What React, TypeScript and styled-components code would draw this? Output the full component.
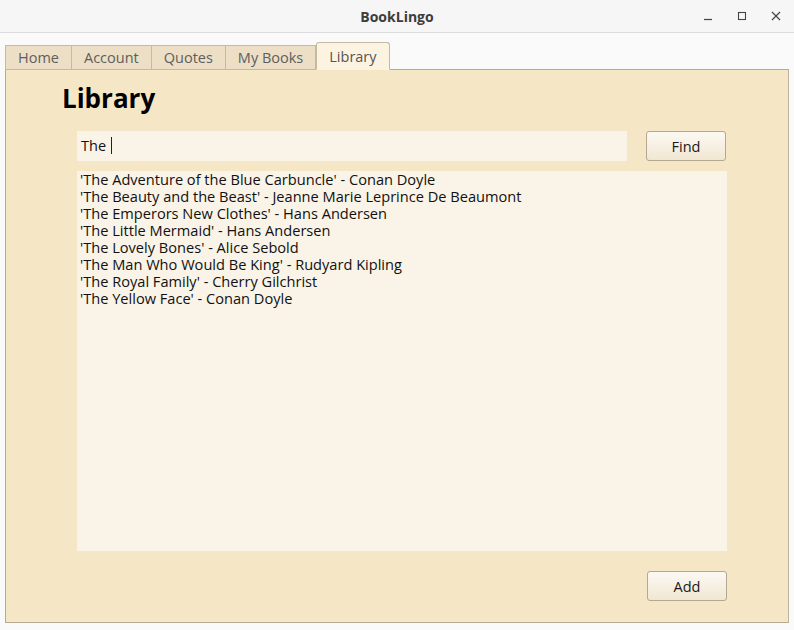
import React from "react"
import styled, { createGlobalStyle } from "styled-components"

const books = [
  "'The Adventure of the Blue Carbuncle' - Conan Doyle",
  "'The Beauty and the Beast' - Jeanne Marie Leprince De Beaumont",
  "'The Emperors New Clothes' - Hans Andersen",
  "'The Little Mermaid' - Hans Andersen",
  "'The Lovely Bones' - Alice Sebold",
  "'The Man Who Would Be King' - Rudyard Kipling",
  "'The Royal Family' - Cherry Gilchrist",
  "'The Yellow Face' - Conan Doyle",
]

const tabs = ["Home", "Account", "Quotes", "My Books", "Library"]

const GlobalStyle = createGlobalStyle`
  html, body {
    margin: 0;
    padding: 0;
    background: #fafafa;
    font-family: "Open Sans", "Noto Sans", sans-serif;
  }
`

const Window = styled.div`
  width: 794px;
  height: 630px;
  display: flex;
  flex-direction: column;
  background: #fafafa;
  overflow: hidden;
`

const TitleBar = styled.div`
  height: 32px;
  flex-shrink: 0;
  display: grid;
  grid-template-columns: 1fr auto 1fr;
  align-items: center;
  background: #f6f6f6;
  border-bottom: 1px solid #dcdcdc;
`

const Title = styled.div`
  grid-column: 2;
  font-size: 14px;
  font-weight: 700;
  color: #3d3d3d;
`

const Controls = styled.div`
  grid-column: 3;
  justify-self: end;
  display: flex;
  gap: 14px;
  padding-right: 8px;
  align-items: center;
`

const Control = styled.span`
  width: 20px;
  height: 20px;
  display: flex;
  align-items: center;
  justify-content: center;
  color: #4a4a4a;
`

const Body = styled.div`
  flex: 1;
  display: flex;
  flex-direction: column;
  padding: 10px 5px 7px 5px;
`

const TabRow = styled.div`
  display: flex;
  align-items: flex-end;
  height: 27px;
  position: relative;
  z-index: 1;
  margin-bottom: -1px;
`

const Tab = styled.div<{ $active?: boolean }>`
  box-sizing: border-box;
  height: ${p => (p.$active ? "28px" : "25px")};
  padding: 0 12px;
  display: flex;
  align-items: center;
  font-size: 14.5px;
  color: ${p => (p.$active ? "#555" : "#5e5e5e")};
  background: ${p => (p.$active ? "#fdf3e1" : "#ecdfc5")};
  border: 1px solid #c4b9a2;
  border-bottom: ${p => (p.$active ? "1px solid #fdf3e1" : "1px solid #c4b9a2")};
  border-left-width: ${p => (p.$active ? "1px" : "0")};
  border-radius: ${p => (p.$active ? "3px 3px 0 0" : "0")};
  &:first-child {
    border-left-width: 1px;
  }
`

const Panel = styled.div`
  flex: 1;
  display: flex;
  flex-direction: column;
  background: #f5e6c6;
  border: 1px solid #b5ab94;
  border-right-color: #bdb39d;
  padding: 12px 61px 21px 56px;
`

const Heading = styled.h1`
  margin: 0 0 18px 0;
  font-size: 26px;
  font-weight: 700;
  color: #000;
  line-height: 32px;
`

const Content = styled.div`
  flex: 1;
  display: flex;
  flex-direction: column;
  padding-left: 15px;
  gap: 10px;
`

const SearchRow = styled.div`
  display: flex;
  gap: 19px;
  align-items: center;
  padding-right: 1px;
  margin-top: -1px;
`

const SearchInput = styled.div`
  flex: 1;
  height: 30px;
  background: #faf4e8;
  display: flex;
  align-items: center;
  padding-left: 4px;
  padding-bottom: 2px;
  box-sizing: border-box;
  font-size: 14.5px;
  color: #111;
`

const Caret = styled.span`
  display: inline-block;
  width: 1px;
  height: 17px;
  background: #222;
  margin-left: 5px;
`

const Button = styled.div`
  box-sizing: border-box;
  width: 80px;
  height: 30px;
  display: flex;
  align-items: center;
  justify-content: center;
  font-size: 14.5px;
  color: #1a1a1a;
  border: 1px solid #b3a890;
  border-radius: 3px;
  background: linear-gradient(#fcf9f3, #f1e6d2);
`

const List = styled.div`
  flex: 1;
  background: #faf4e8;
  padding: 0 3px;
  display: flex;
  flex-direction: column;
`

const Item = styled.div`
  font-size: 14.6px;
  line-height: 17px;
  color: #111;
  white-space: nowrap;
`

const Footer = styled.div`
  display: flex;
  justify-content: flex-end;
  padding-top: 20px;
`

export default function App() {
  return (
    <>
      <GlobalStyle />
      <Window>
        <TitleBar>
          <Title>BookLingo</Title>
          <Controls>
            <Control>
              <svg width="10" height="10" viewBox="0 0 10 10">
                <path d="M1 8.5h8" stroke="#444" strokeWidth="1.2" />
              </svg>
            </Control>
            <Control>
              <svg width="10" height="10" viewBox="0 0 10 10">
                <rect x="1.5" y="1.5" width="7" height="7" fill="none" stroke="#444" strokeWidth="1.1" />
              </svg>
            </Control>
            <Control>
              <svg width="10" height="10" viewBox="0 0 10 10">
                <path d="M1 1l8 8M9 1l-8 8" stroke="#444" strokeWidth="1.2" />
              </svg>
            </Control>
          </Controls>
        </TitleBar>
        <Body>
          <TabRow>
            {tabs.map(t => (
              <Tab key={t} $active={t === "Library"}>
                {t}
              </Tab>
            ))}
          </TabRow>
          <Panel>
            <Heading>Library</Heading>
            <Content>
              <SearchRow>
                <SearchInput>
                  The
                  <Caret />
                </SearchInput>
                <Button>Find</Button>
              </SearchRow>
              <List>
                {books.map(b => (
                  <Item key={b}>{b}</Item>
                ))}
              </List>
            </Content>
            <Footer>
              <Button>Add</Button>
            </Footer>
          </Panel>
        </Body>
      </Window>
    </>
  )
}
